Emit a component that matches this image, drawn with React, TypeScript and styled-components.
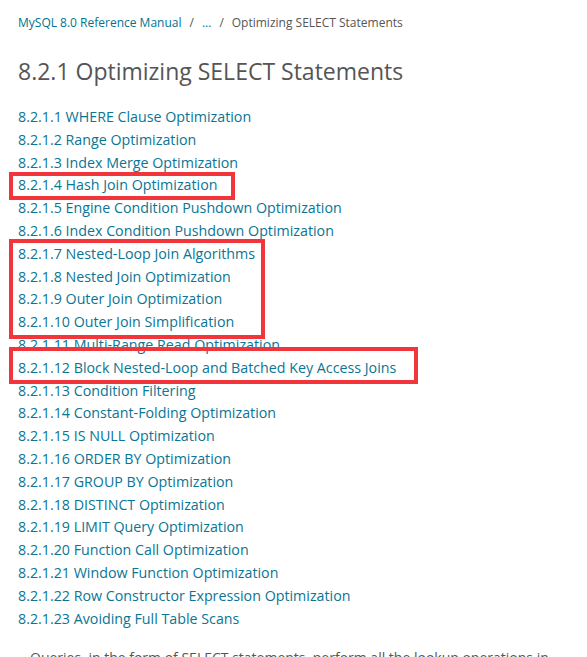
import styled, { createGlobalStyle } from 'styled-components';

const Global = createGlobalStyle`
    body {
        margin: 0;
        background: #fff;
        font-family: "Open Sans", "Liberation Sans", sans-serif;
        color: #555;
    }
`;

const Page = styled.div`
    position: relative;
    padding: 14px 18px 0;
    height: 657px;
    overflow: hidden;
    box-sizing: border-box;
`;

const Crumbs = styled.div`
    display: flex;
    align-items: center;
    gap: 8px;
    font-size: 12px;
    line-height: 17px;
    color: #555;
`;

const CrumbLink = styled.a`
    color: #00758f;
    text-decoration: none;
`;

const Title = styled.h1`
    margin: 24px 0 19px;
    font-size: 23px;
    font-weight: 400;
    line-height: 32px;
    color: #555;
`;

const TocList = styled.ul`
    list-style: none;
    margin: 0;
    padding: 0;
`;

const TocItem = styled.li`
    font-size: 14.25px;
    line-height: 22.8px;
`;

const TocLink = styled.a`
    color: #0a7594;
    text-decoration: none;
`;

const Para = styled.p`
    margin: 17px 0 0;
    font-size: 14px;
    line-height: 22px;
    color: #555;
    padding-left: 12px;
`;

// red annotation frames drawn over the screenshot
const Frame = styled.div<{ $x: number; $y: number; $w: number; $h: number }>`
    position: absolute;
    left: ${p => p.$x}px;
    top: ${p => p.$y}px;
    width: ${p => p.$w}px;
    height: ${p => p.$h}px;
    border: 4px solid #f2353a;
    box-sizing: border-box;
    pointer-events: none;
`;

const items = [
    'WHERE Clause Optimization',
    'Range Optimization',
    'Index Merge Optimization',
    'Hash Join Optimization',
    'Engine Condition Pushdown Optimization',
    'Index Condition Pushdown Optimization',
    'Nested-Loop Join Algorithms',
    'Nested Join Optimization',
    'Outer Join Optimization',
    'Outer Join Simplification',
    'Multi-Range Read Optimization',
    'Block Nested-Loop and Batched Key Access Joins',
    'Condition Filtering',
    'Constant-Folding Optimization',
    'IS NULL Optimization',
    'ORDER BY Optimization',
    'GROUP BY Optimization',
    'DISTINCT Optimization',
    'LIMIT Query Optimization',
    'Function Call Optimization',
    'Window Function Optimization',
    'Row Constructor Expression Optimization',
    'Avoiding Full Table Scans',
];

export default function App() {
    return (
        <>
            <Global />
            <Page>
                <Crumbs>
                    <CrumbLink>MySQL 8.0 Reference Manual</CrumbLink>
                    <span>/</span>
                    <CrumbLink>...</CrumbLink>
                    <span>/</span>
                    <span>Optimizing SELECT Statements</span>
                </Crumbs>
                <Title>8.2.1 Optimizing SELECT Statements</Title>
                <TocList>
                    {items.map((t, i) => (
                        <TocItem key={t}>
                            <TocLink>8.2.1.{i + 1} {t}</TocLink>
                        </TocItem>
                    ))}
                </TocList>
                <Para>
                    Queries, in the form of SELECT statements, perform all the lookup operations in the database.
                </Para>
                <Frame $x={9} $y={172} $w={226} $h={28} />
                <Frame $x={9} $y={239} $w={256} $h={100} />
                <Frame $x={9} $y={347} $w={409} $h={37} />
            </Page>
        </>
    );
}
